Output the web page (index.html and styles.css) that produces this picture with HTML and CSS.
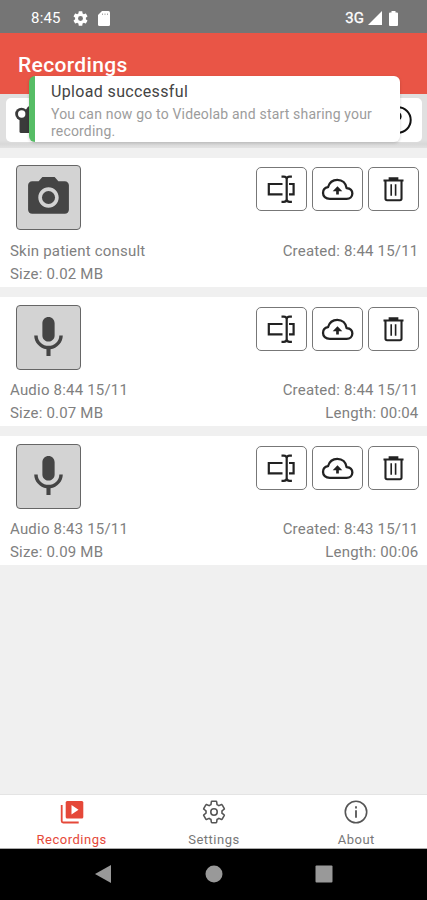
FILE: index.html
```
<!DOCTYPE html>
<html lang="en">
<head>
<meta charset="utf-8">
<meta name="viewport" content="width=device-width">
<title>Recordings</title>
<link rel="stylesheet" href="styles.css">
</head>
<body>
<svg width="0" height="0" class="defs">
  <symbol id="rename" viewBox="0 0 28 28"><path fill="none" stroke="currentColor" stroke-width="2.200" d="M15.500 9H1.800v10.400h13.700M22 9h4.600v10.400H22M19.700 2v25M14.500 1.700h2.200q3 0 3 2.500q0-2.500 3-2.500h2.200M14.500 26.800h2.200q3 0 3-2.500q0 2.500 3 2.500h2.200"/></symbol>
  <symbol id="cloud" viewBox="0 0 34 24"><path fill="none" stroke="currentColor" stroke-width="2.400" stroke-linejoin="round" d="M9 21.800C4.500 21.800 1.900 19 1.900 15.600c0-3.200 2.200-5.500 5.200-6C8.400 5 12 1.900 16.800 1.900c5.300 0 9 3.700 9.700 8.700 3.600.3 6 2.500 6 5.600 0 3.300-2.700 5.600-6 5.600z"/><path fill="currentColor" d="M17 8.500l5 5.200h-3.600v3.500h-2.800v-3.500H12z"/></symbol>
  <symbol id="trash" viewBox="0 0 22 26"><path fill="none" stroke="currentColor" stroke-width="2.200" d="M.5 3.500h21M7 3V1.300h8V3M2.600 4v18.500q0 1.700 1.700 1.700h13.400q1.700 0 1.700-1.700V4"/><path fill="none" stroke="currentColor" stroke-width="1.700" d="M8.600 7.500v12M13.200 7.500v12"/></symbol>
  <symbol id="mic" viewBox="0 0 24 24"><path fill="currentColor" d="M12 14c1.660 0 3-1.340 3-3V5c0-1.660-1.340-3-3-3S9 3.340 9 5v6c0 1.660 1.340 3 3 3zM17.300 11c0 3-2.540 5.100-5.300 5.100S6.700 14 6.700 11H5c0 3.410 2.720 6.230 6 6.720V21h2v-3.280c3.280-.48 6-3.300 6-6.720z"/></symbol>
  <symbol id="camera" viewBox="0 0 24 24"><circle cx="12" cy="12" r="3.200" fill="currentColor"/><path fill="currentColor" d="M9 2L7.170 4H4c-1.100 0-2 .9-2 2v12c0 1.100.9 2 2 2h16c1.100 0 2-.9 2-2V6c0-1.100-.9-2-2-2h-3.170L15 2zm3 15c-2.760 0-5-2.240-5-5s2.240-5 5-5 5 2.240 5 5-2.240 5-5 5z"/></symbol>
  <path id="gear" d="M19.140 12.940c.04-.3.06-.61.06-.94s-.02-.64-.07-.94l2.030-1.580c.18-.14.23-.41.12-.61l-1.920-3.320c-.12-.22-.37-.29-.59-.22l-2.390.96c-.5-.38-1.030-.7-1.620-.94l-.36-2.540c-.04-.24-.24-.41-.48-.41h-3.840c-.24 0-.43.17-.47.41l-.36 2.540c-.59.24-1.130.57-1.620.94l-2.390-.96c-.22-.08-.47 0-.59.22L2.740 8.870c-.12.210-.08.47.12.61l2.030 1.580c-.05.3-.09.63-.09.94s.02.64.07.94l-2.030 1.580c-.18.14-.23.41-.12.61l1.920 3.320c.12.22.37.29.59.22l2.390-.96c.5.38 1.030.7 1.620.94l.36 2.540c.05.24.24.41.48.41h3.840c.24 0 .44-.17.47-.41l.36-2.540c.59-.24 1.130-.56 1.620-.94l2.390.96c.22.08.47 0 .59-.22l1.920-3.320c.12-.22.07-.47-.12-.61z"/>
</svg>

<div class="status">
  <span class="clock">8:45</span>
  <svg class="s-gear" viewBox="2 2 20 20"><use href="#gear"/><circle class="hub" cx="12" cy="12" r="3.300"/></svg>
  <svg class="s-card" viewBox="0 0 12 15"><path fill="#fff" d="M4 0h6.500Q12 0 12 1.500v12q0 1.500-1.500 1.500h-9Q0 15 0 13.500V4z"/><path stroke="#aaa" d="M4.500 2.500v1.500M7 2.500v1.500M9.500 2.500v1.500"/></svg>
  <span class="net">3G</span>
  <svg class="s-signal" viewBox="0 0 14 14"><path fill="#fff" d="M14 0v14H0z"/></svg>
  <svg class="s-battery" viewBox="0 0 9 15"><path fill="#fff" d="M2.500 1.500V0h4v1.500H8q1 0 1 1V14q0 1-1 1H1q-1 0-1-1V2.500q0-1 1-1z"/></svg>
</div>
<header class="title">Recordings</header>
<div class="filters">
  <div class="filter-box">
    <svg class="video" viewBox="0 0 32 28"><g fill="#3a3a3a"><circle cx="6.500" cy="8" r="6.300"/><circle cx="17" cy="6" r="6.500"/><rect x="4.500" y="10" width="22" height="17" rx="1.500"/></g><circle cx="6.700" cy="8" r="3.700" fill="#fff"/></svg>
    <svg class="help" viewBox="0 0 28 28"><circle cx="14" cy="14" r="12.700" fill="none" stroke="#111" stroke-width="2"/><path fill="none" stroke="#111" stroke-width="2.300" d="M8.500 11q0-4 4-4t4 3.700c0 3-4 3-4 6.300M12.500 19v2.500"/></svg>
  </div>
</div>
<div class="toast">
  <div class="toast-title">Upload successful</div>
  <div class="toast-text">You can now go to Videolab and start sharing your recording.</div>
</div>

<main class="list">
  <article class="card">
    <div class="top"><div class="thumb"><svg><use href="#camera"/></svg></div>
      <div class="actions"><button><svg class="i-rename"><use href="#rename"/></svg></button><button><svg class="i-cloud"><use href="#cloud"/></svg></button><button><svg class="i-trash"><use href="#trash"/></svg></button></div></div>
    <div class="row"><span>Skin patient consult</span><span>Created: 8:44 15/11</span></div>
    <div class="row"><span>Size: 0.02 MB</span></div>
  </article>
  <article class="card">
    <div class="top"><div class="thumb"><svg><use href="#mic"/></svg></div>
      <div class="actions"><button><svg class="i-rename"><use href="#rename"/></svg></button><button><svg class="i-cloud"><use href="#cloud"/></svg></button><button><svg class="i-trash"><use href="#trash"/></svg></button></div></div>
    <div class="row"><span>Audio 8:44 15/11</span><span>Created: 8:44 15/11</span></div>
    <div class="row"><span>Size: 0.07 MB</span><span>Length: 00:04</span></div>
  </article>
  <article class="card">
    <div class="top"><div class="thumb"><svg><use href="#mic"/></svg></div>
      <div class="actions"><button><svg class="i-rename"><use href="#rename"/></svg></button><button><svg class="i-cloud"><use href="#cloud"/></svg></button><button><svg class="i-trash"><use href="#trash"/></svg></button></div></div>
    <div class="row"><span>Audio 8:43 15/11</span><span>Created: 8:43 15/11</span></div>
    <div class="row"><span>Size: 0.09 MB</span><span>Length: 00:06</span></div>
  </article>
</main>

<nav class="tabs">
  <div class="tab active"><svg viewBox="0 0 24 24"><rect x="5.700" y="1" width="17.600" height="17.600" rx="1.500" fill="currentColor"/><path fill="#fff" d="M11.500 5v9.500l7-4.750z"/><path fill="none" stroke="currentColor" stroke-width="1.800" d="M1.700 5v16q0 1.500 1.500 1.500h15.500"/></svg><span>Recordings</span></div>
  <div class="tab"><svg class="outline" viewBox="1.200 1.200 21.600 21.600"><use href="#gear"/><circle cx="12" cy="12" r="2.900"/></svg><span>Settings</span></div>
  <div class="tab"><svg viewBox="0 0 24 24"><circle cx="12" cy="12" r="10.700" fill="none" stroke="currentColor" stroke-width="1.600"/><path stroke="currentColor" stroke-width="1.800" d="M12 6.300v2.200M12 10.300v7.500"/></svg><span>About</span></div>
</nav>
<div class="system">
  <svg viewBox="0 0 16 18"><path fill="#999" d="M16 0v18L0 9z"/></svg>
  <svg viewBox="0 0 18 18"><circle cx="9" cy="9" r="8.500" fill="#999"/></svg>
  <svg viewBox="0 0 18 18"><rect x=".5" y=".5" width="17" height="17" rx="1" fill="#999"/></svg>
</div>
</body>
</html>
```
FILE: styles.css
```
* { box-sizing: border-box; }
body {
  margin: 0;
  width: 427px;
  height: 900px;
  display: flex;
  flex-direction: column;
  position: relative;
  overflow: hidden;
  background: #f0f0f0;
  font-family: Roboto, sans-serif;
  color: #808080;
}
svg { display: block; flex: none; }
.defs { position: absolute; }

.status {
  height: 33px;
  flex: none;
  background: #757575;
  color: #fff;
  display: flex;
  align-items: center;
  padding: 3px 29px 0 31px;
  font-size: 15px;
}
.clock { width: 42px; letter-spacing: 0.2px; }
.s-gear { width: 15px; height: 15px; fill: #fff; }
.s-gear .hub { fill: #757575; }
.s-card { width: 12px; height: 15px; margin-left: 10px; }
.net { margin-left: auto; margin-right: -1px; font-size: 15px; letter-spacing: 0; -webkit-text-stroke: 0.3px #fff; }
.s-signal { width: 14px; height: 14px; margin-left: 5px; }
.s-battery { width: 9px; height: 15px; margin-left: 7px; }

.title {
  height: 61px;
  flex: none;
  background: #e95546;
  color: #fff;
  font-size: 21px;
  font-weight: 500;
  line-height: 25px;
  letter-spacing: 0.35px;
  padding: 20px 18px 0;
}
.filters {
  height: 54px;
  flex: none;
  background: linear-gradient(#e0e0e0 0 46px, #d8d8d8 50px, #e2e2e2);
  padding: 4px 5px 6px 6px;
}
.filter-box {
  height: 44px;
  background: #fff;
  border-radius: 5px;
  display: flex;
  align-items: center;
  justify-content: space-between;
  padding: 0 10px 0 9px;
}
.video { width: 32px; height: 28px; }
.help { width: 28px; height: 28px; }

.toast {
  position: absolute;
  left: 29px;
  top: 76px;
  width: 371px;
  height: 66px;
  background: #fff;
  border-left: 6px solid #56bd65;
  border-radius: 6px;
  padding: 6px 16px;
  box-shadow: 0 1px 3px rgba(0, 0, 0, 0.18);
}
.toast-title { color: #444; font-size: 16px; line-height: 20px; letter-spacing: 0.35px; }
.toast-text { color: #9c9c9c; font-size: 14px; line-height: 16.500px; letter-spacing: 0.18px; margin-top: 4px; }

.list { flex: 1; display: flex; flex-direction: column; gap: 10px; padding-top: 10px; }
.card { height: 129px; background: #fff; padding: 7px 8px 0 10px; }
.card + .card { padding-top: 8px; }
.top { display: flex; justify-content: space-between; height: 74px; padding-left: 6px; }
.card + .card .top { height: 73px; }
.thumb {
  width: 65px;
  height: 65px;
  border: 1px solid #666;
  border-radius: 4px;
  background: #d3d3d3;
  color: #454545;
  display: grid;
  place-items: center;
}
.thumb svg { width: 49px; height: 49px; }
.actions { display: flex; gap: 5px; padding-top: 2px; }
.actions button {
  width: 51px;
  height: 44px;
  padding: 0;
  border: 1px solid #777;
  border-radius: 5px;
  background: #fff;
  color: #222;
  display: grid;
  place-items: center;
}
.i-rename { width: 28px; height: 28px; margin-right: 1px; }
.i-cloud { width: 33px; height: 23px; }
.i-trash { width: 21px; height: 25px; }
.row {
  display: flex;
  justify-content: space-between;
  height: 23px;
  line-height: 24px;
  font-size: 15px;
  letter-spacing: 0.2px;
}
.row span + span { margin-right: 0.500px; }

.tabs {
  height: 55px;
  flex: none;
  background: #fff;
  border-top: 1px solid #e4e4e4;
  border-bottom: 1px solid #aaa;
  display: grid;
  grid-template-columns: repeat(3, 1fr);
}
.tab {
  display: flex;
  flex-direction: column;
  align-items: center;
  padding: 5px 0 0 1px;
  font-size: 13px;
  letter-spacing: 0.5px;
  color: #777;
}
.tab svg { width: 24px; height: 24px; color: #555; }
.tab span { line-height: 16px; margin-top: 8px; }
.tab.active, .tab.active svg { color: #e54839; }
.outline { fill: none; stroke: #555; stroke-width: 1.400; }

.system {
  height: 51px;
  flex: none;
  background: #000;
  display: flex;
  align-items: center;
  gap: 92.500px;
  padding: 0 0 1px 94px;
}
.system svg { width: 18px; height: 18px; }
```
